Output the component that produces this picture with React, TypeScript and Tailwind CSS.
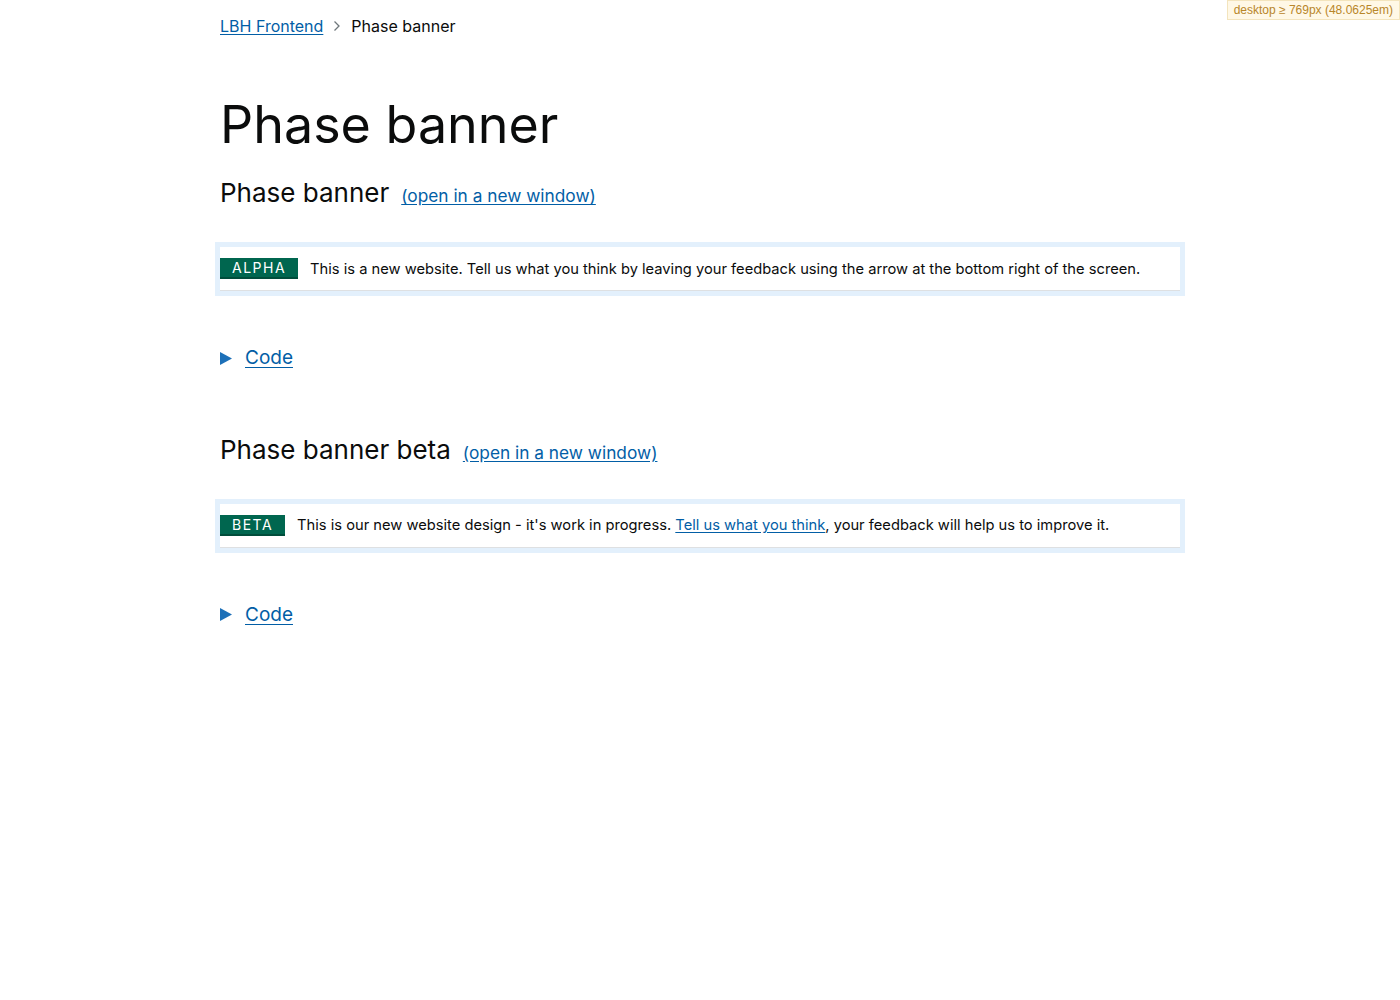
import React from "react"

function Banner({ tag, children }: { tag: string; children: React.ReactNode }) {
  return (
    <div className="-mx-[5px] border-[5px] border-[#e3f0fc]">
      <div className="flex items-center bg-white border-b border-[#dee0e2] py-[11px]">
        <strong className="shrink-0 bg-[#00664f] border-b-2 border-[#004d3b] text-white font-normal text-[14px] tracking-[1.5px] leading-none px-3 pt-[3px] pb-[2px] mr-3">
          {tag}
        </strong>
        <span className="text-[14.7px] text-[#0b0c0c] leading-5">{children}</span>
      </div>
    </div>
  )
}

function Example({ title, tag, children }: { title: string; tag: string; children: React.ReactNode }) {
  return (
    <section>
      <h2 className="flex items-baseline text-[26px] text-[#0b0c0c] leading-8">
        {title}
        <a href="#" className="ml-3 text-[17.3px] text-[#025ea6] underline underline-offset-2">
          (open in a new window)
        </a>
      </h2>
      <div className="mt-[30px]">
        <Banner tag={tag}>{children}</Banner>
      </div>
      <div className="mt-[48px] flex items-center">
        <svg width="12" height="13" viewBox="0 0 12 13" className="mr-[13px]">
          <polygon points="0,0 12,6.5 0,13" fill="#1d70b8" />
        </svg>
        <a href="#" className="text-[19px] text-[#025ea6] underline underline-offset-3">
          Code
        </a>
      </div>
    </section>
  )
}

export default function App() {
  return (
    <div className="relative min-h-[1000px] bg-white" style={{ fontFamily: "Inter, 'Open Sans', sans-serif" }}>
      <div className="absolute top-0 right-0 bg-[#fff8e6] border border-[#f3e4bd] text-[#b8862a] text-[12px] px-[6px] py-[1px] leading-4" style={{ fontFamily: "'Liberation Sans', sans-serif" }}>
        desktop ≥ 769px (48.0625em)
      </div>
      <div className="w-[960px] mx-auto">
        <nav className="pt-[16px] flex items-center text-[16px] leading-5">
          <a href="#" className="text-[#025ea6] underline underline-offset-2">LBH Frontend</a>
          <svg width="8" height="12" viewBox="0 0 8 12" className="mx-[10px]">
            <polyline points="1.5,1.5 6,6 1.5,10.5" fill="none" stroke="#6f777b" strokeWidth="1.3" />
          </svg>
          <span className="text-[#0b0c0c]">Phase banner</span>
        </nav>
        <h1 className="mt-[59px] text-[52px] leading-[60px] text-[#0b0c0c]">Phase banner</h1>
        <div className="mt-[22px]">
          <Example title="Phase banner" tag="ALPHA">
            This is a new website. Tell us what you think by leaving your feedback using the arrow at the bottom right of the screen.
          </Example>
        </div>
        <div className="mt-[61px]">
          <Example title="Phase banner beta" tag="BETA">
            This is our new website design - it's work in progress.{" "}
            <a href="#" className="text-[#025ea6] underline underline-offset-2">Tell us what you think</a>, your feedback will help us to improve it.
          </Example>
        </div>
      </div>
    </div>
  )
}
